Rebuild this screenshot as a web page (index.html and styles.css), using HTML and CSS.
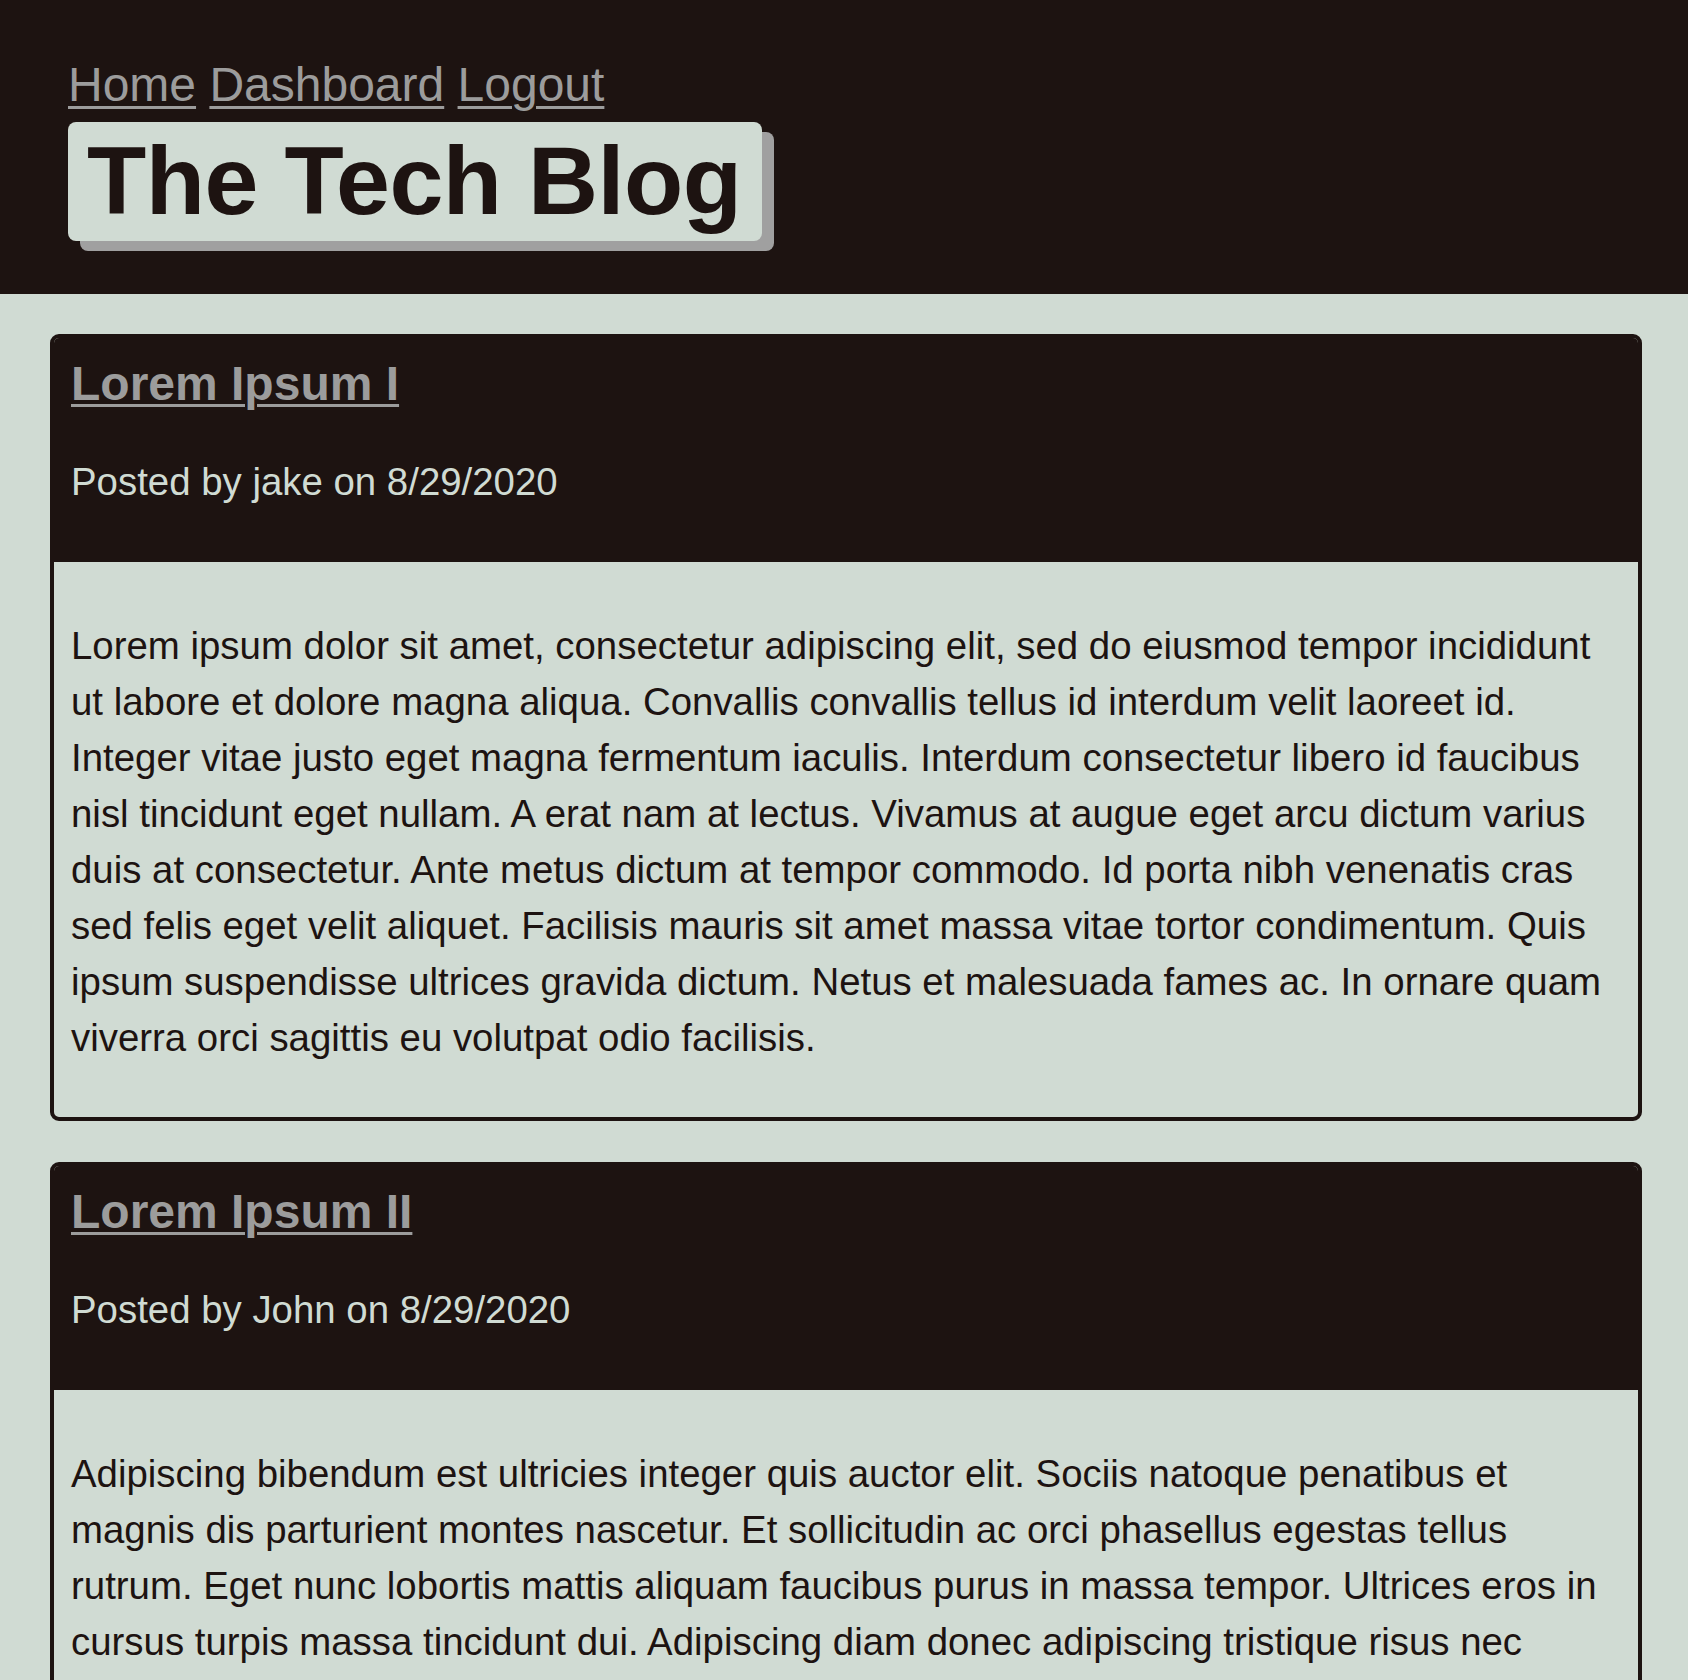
FILE: index.html
```html
<!DOCTYPE html>
<html lang="en">
<head>
<meta charset="utf-8">
<title>The Tech Blog</title>
<link rel="stylesheet" href="styles.css">
</head>
<body>
<header class="site-header">
  <nav class="nav">
    <a href="#">Home</a>
    <a href="#">Dashboard</a>
    <a href="#">Logout</a>
  </nav>
  <h1 class="brand">The Tech Blog</h1>
</header>
<main class="posts">
  <article class="card">
    <div class="card-head">
      <h2 class="card-title"><a href="#">Lorem Ipsum I</a></h2>
      <p class="meta">Posted by jake on 8/29/2020</p>
    </div>
    <div class="card-body">
      <p>Lorem ipsum dolor sit amet, consectetur adipiscing elit, sed do eiusmod tempor incididunt ut labore et dolore magna aliqua. Convallis convallis tellus id interdum velit laoreet id. Integer vitae justo eget magna fermentum iaculis. Interdum consectetur libero id faucibus nisl tincidunt eget nullam. A erat nam at lectus. Vivamus at augue eget arcu dictum varius duis at consectetur. Ante metus dictum at tempor commodo. Id porta nibh venenatis cras sed felis eget velit aliquet. Facilisis mauris sit amet massa vitae tortor condimentum. Quis ipsum suspendisse ultrices gravida dictum. Netus et malesuada fames ac. In ornare quam viverra orci sagittis eu volutpat odio facilisis.</p>
    </div>
  </article>
  <article class="card">
    <div class="card-head">
      <h2 class="card-title"><a href="#">Lorem Ipsum II</a></h2>
      <p class="meta">Posted by John on 8/29/2020</p>
    </div>
    <div class="card-body">
      <p>Adipiscing bibendum est ultricies integer quis auctor elit. Sociis natoque penatibus et magnis dis parturient montes nascetur. Et sollicitudin ac orci phasellus egestas tellus rutrum. Eget nunc lobortis mattis aliquam faucibus purus in massa tempor. Ultrices eros in cursus turpis massa tincidunt dui. Adipiscing diam donec adipiscing tristique risus nec feugiat in fermentum. Vitae congue mauris rhoncus aenean vel elit scelerisque mauris.</p>
    </div>
  </article>
</main>
</body>
</html>
```
FILE: styles.css
```css
* {
  box-sizing: border-box;
}

html, body {
  margin: 0;
  padding: 0;
}

body {
  background: #d0dbd3;
  color: #1d1311;
  font-family: "Liberation Sans", Arial, Helvetica, sans-serif;
}

.site-header {
  background: #1d1311;
  padding: 57px 0 53px 68px;
}

.nav {
  font-size: 48px;
  line-height: 55px;
}

.nav a {
  color: #9c9c9c;
  text-decoration: underline;
  text-decoration-thickness: 3px;
  text-underline-offset: 5px;
}

.brand {
  display: inline-block;
  margin: 10px 0 0 0;
  padding: 0 20px 1px 19px;
  background: #d0dbd3;
  color: #1d1311;
  font-size: 97px;
  font-weight: bold;
  line-height: 118px;
  letter-spacing: -0.5px;
  border-radius: 8px;
  box-shadow: 12px 10px 0 #a0a0a0;
}

.posts {
  padding: 40px 46px 0 50px;
}

.card {
  border: 4px solid #1d1311;
  border-radius: 9px;
  background: #d0dbd3;
  margin-bottom: 41px;
  overflow: hidden;
}

.card-head {
  background: #1d1311;
  padding: 18px 17px 58px;
}

.card-title {
  margin: 0;
  font-size: 48px;
  line-height: 55px;
  font-weight: bold;
}

.card-title a {
  color: #9c9c9c;
  text-decoration: underline;
  text-decoration-thickness: 3px;
  text-underline-offset: 4px;
}

.meta {
  margin: 49px 0 0;
  color: #d0dbd3;
  font-size: 38.4px;
  line-height: 44px;
}

.card-body {
  padding: 56px 17px 51px;
}

.card-body p {
  margin: 0;
  font-size: 38.4px;
  line-height: 56px;
}
```
